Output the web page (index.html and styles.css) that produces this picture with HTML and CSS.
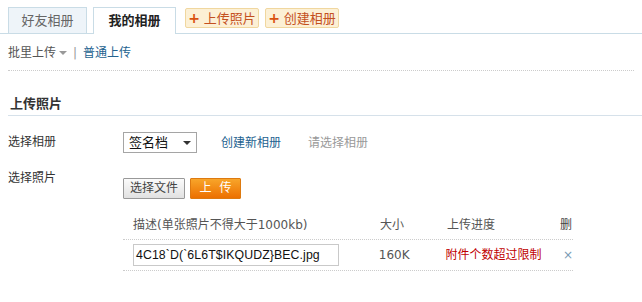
FILE: index.html
```html
<!DOCTYPE html>
<html lang="zh-CN">
<head>
    <meta charset="UTF-8">
    <title>上传照片</title>
    <link rel="stylesheet" href="styles.css">
</head>
<body>
    <div class="tabs">
        <a class="tab">好友相册</a>
        <a class="tab current">我的相册</a>
        <a class="act">上传照片</a>
        <a class="act">创建相册</a>
    </div>

    <div class="modes">
        <span class="batch">批里上传</span><i class="caret"></i>
        <span class="sep">|</span>
        <a class="link">普通上传</a>
    </div>

    <h3 class="title">上传照片</h3>

    <div class="row album-row">
        <label>选择相册</label>
        <div class="field">
            <span class="select">签名档 <i class="caret dark"></i></span>
            <a class="link new">创建新相册</a>
            <span class="hint">请选择相册</span>
        </div>
    </div>

    <div class="row photo-row">
        <label>选择照片</label>
        <div class="field pick">
            <button class="btn">选择文件</button>
            <button class="btn orange">上 传</button>
        </div>
    </div>

    <div class="list">
        <div class="line head">
            <span class="c-desc">描述(单张照片不得大于1000kb)</span>
            <span class="c-size">大小</span>
            <span class="c-prog">上传进度</span>
            <span class="c-del">删</span>
        </div>
        <div class="line">
            <span class="c-desc"><span class="input">4C18`D(`6L6T$IKQUDZ}BEC.jpg</span></span>
            <span class="c-size">160K</span>
            <span class="c-prog err">附件个数超过限制</span>
            <span class="c-del x">×</span>
        </div>
    </div>
</body>
</html>
```

FILE: styles.css
```css
* { box-sizing: border-box; }

body {
  margin: 0;
  padding: 7px 0 0;
  font: 12px/1.5 "DejaVu Sans", "Noto Sans CJK SC", sans-serif;
  color: #333;
  background: #fff;
}

/* tabs */
.tabs {
  display: flex;
  align-items: flex-start;
  padding-left: 8px;
  border-bottom: 1px solid #c9dce6;
  height: 27px;
}
.tab {
  width: 79px;
  height: 26px;
  line-height: 25px;
  text-align: center;
  font-size: 13px;
  color: #666;
  background: #eef4f9;
  border: 1px solid #c9dce6;
  border-bottom: none;
}
.tab.current {
  width: 83px;
  height: 27px;
  margin-left: 6px;
  background: #fff;
  color: #222;
  font-weight: bold;
}
.act {
  margin: 1px 0 0 9px;
  width: 74px;
  height: 20px;
  line-height: 18px;
  text-align: center;
  font-size: 13px;
  color: #c4501e;
  background: #fcf0d5;
  border: 1px solid #f0d79f;
  border-radius: 2px;
}
.act + .act { margin-left: 6px; }
.act::before {
  content: "+";
  font-weight: bold;
  color: #d9520f;
  margin-right: 4px;
  font-size: 14px;
}

/* modes */
.modes {
  display: flex;
  align-items: center;
  margin: 0 8px;
  height: 37px;
  padding-top: 2px;
  border-bottom: 1px dotted #ccc;
  color: #555;
}
.caret {
  display: inline-block;
  width: 0;
  height: 0;
  border: 4px solid transparent;
  border-top: 4px solid #999;
  border-bottom: none;
  margin-left: 3px;
}
.caret.dark { border-top-color: #333; margin: 0; }
.sep { color: #999; margin: 0 6px 0 6px; }
.link { color: #23628f; }

.title {
  margin: 0 0 0 8px;
  height: 45px;
  padding: 24px 0 0 2px;
  font-size: 13px;
  line-height: 18px;
  font-weight: bold;
  color: #333;
  border-bottom: 1px solid #d6e1ea;
}

.row {
  display: flex;
  margin-left: 8px;
}
.row label { width: 115px; color: #333; }

.album-row { margin-top: 16px; align-items: center; }
.album-row label { line-height: 21px; }
.photo-row { margin-top: 16px; }
.photo-row label { line-height: 18px; }

.field { display: flex; align-items: center; }
.select {
  display: flex;
  align-items: center;
  justify-content: space-between;
  width: 74px;
  height: 21px;
  padding: 0 5px 0 5px;
  border: 1px solid #a5a5a5;
  font-size: 13px;
  color: #111;
}
.new { margin-left: 24px; }
.hint { margin-left: 27px; color: #999; }

.pick { margin-top: 9px; gap: 5px; }
.btn {
  font: inherit;
  height: 21px;
  padding: 0 6px;
  line-height: 19px;
  color: #444;
  background: linear-gradient(#fbfbfb, #e1e1e1);
  border: 1px solid #999;
  border-radius: 1px;
}
.btn.orange {
  width: 51px;
  color: #fff;
  word-spacing: 4px;
  background: linear-gradient(#f8a52a, #ec7000);
  border-color: #dd7a10;
}

/* file list */
.list { margin: 11px 69px 0 123px; }
.line {
  display: flex;
  align-items: center;
  height: 31px;
  border-bottom: 1px dotted #ccc;
}
.line.head { height: 30px; color: #555; padding-top: 1px; }
.c-desc { width: 257px; padding-left: 10px; }
.c-size { width: 67px; color: #555; }
.c-prog { width: 113px; }
.c-del { color: #444; }
.err { color: #c00000; }
.x { color: #7a9bb5; padding-left: 5px; }
.input {
  display: block;
  width: 206px;
  height: 22px;
  line-height: 20px;
  padding-left: 2px;
  border: 1px solid #c9c9c9;
  color: #111;
  font-family: "Liberation Sans", Arial, sans-serif;
  font-size: 12.3px;
  letter-spacing: 0.1px;
}
```
